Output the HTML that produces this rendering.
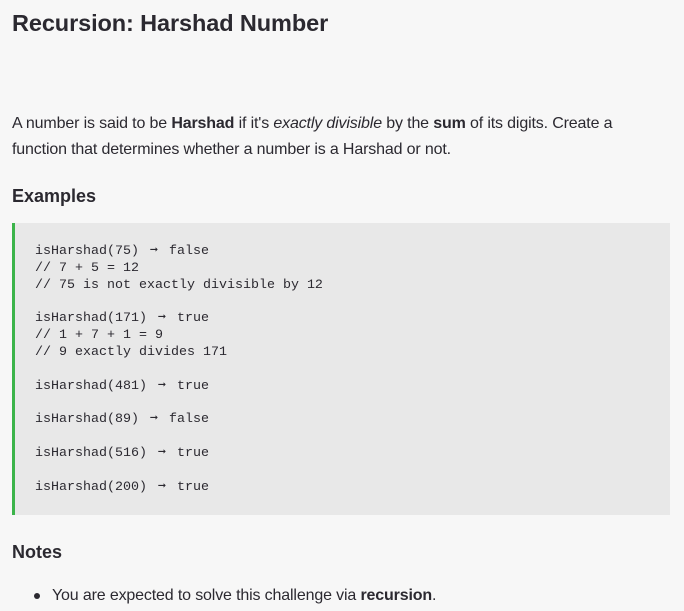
<!DOCTYPE html>
<html><head><meta charset="utf-8"><style>
body{margin:0;background:#f7f7f7;color:#2b2930;font-family:"Liberation Sans",sans-serif;width:684px;height:611px;overflow:hidden;position:relative}
.a{position:absolute;left:12px;white-space:nowrap}
h1{font-size:23.5px;font-weight:bold;margin:0;top:10px;letter-spacing:-0.1px}
h2{font-size:18px;font-weight:bold;margin:0}
p{margin:0;font-size:16px;line-height:26px;top:111px;letter-spacing:-0.15px}
.code{position:absolute;left:12px;top:223px;width:658px;height:292px;background:#e8e8e8;border-left:3px solid #3bb44a;box-sizing:border-box}
pre{margin:0;position:absolute;left:20px;top:21px;font-family:"Liberation Mono",monospace;font-size:13.33px;line-height:16.85px;color:#2b2930}
.r{display:inline-block;width:14px;text-align:center;font-weight:bold}
ul{margin:0;padding:0;list-style:none;font-size:16px;letter-spacing:-0.15px}
</style></head><body>
<h1 class="a">Recursion: Harshad Number</h1>
<p class="a">A number is said to be <b>Harshad</b> if it's <i>exactly divisible</i> by the <b>sum</b> of its digits. Create a<br>function that determines whether a number is a Harshad or not.</p>
<h2 class="a" style="top:186px">Examples</h2>
<div class="code"><pre>isHarshad(75) <span class="r">➞</span> false
// 7 + 5 = 12
// 75 is not exactly divisible by 12

isHarshad(171) <span class="r">➞</span> true
// 1 + 7 + 1 = 9
// 9 exactly divides 171

isHarshad(481) <span class="r">➞</span> true

isHarshad(89) <span class="r">➞</span> false

isHarshad(516) <span class="r">➞</span> true

isHarshad(200) <span class="r">➞</span> true</pre></div>
<h2 class="a" style="top:542px">Notes</h2>
<ul class="a" style="top:587px;left:34px"><li><span style="display:inline-block;width:6px;height:6px;border-radius:3px;background:#2b2930;vertical-align:middle;margin-right:12px"></span>You are expected to solve this challenge via <b>recursion</b>.</li></ul>
</body></html>
